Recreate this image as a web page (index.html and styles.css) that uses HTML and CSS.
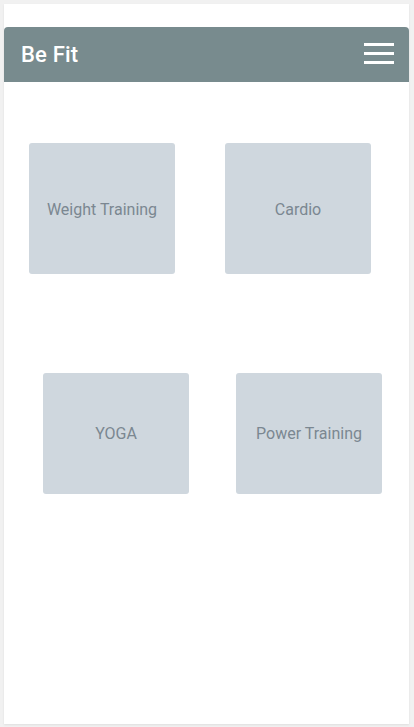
FILE: index.html
```html
<!DOCTYPE html>
<html>
<head>
<meta charset="utf-8">
<link rel="stylesheet" href="styles.css">
</head>
<body>
<div class="phone">
  <header class="topbar">
    <span class="brand">Be Fit</span>
    <span class="menu"><i></i><i></i><i></i></span>
  </header>
  <main>
    <div class="row row-a">
      <div class="tile tall">Weight Training</div>
      <div class="tile tall">Cardio</div>
    </div>
    <div class="row row-b">
      <div class="tile short">YOGA</div>
      <div class="tile short">Power Training</div>
    </div>
  </main>
</div>
</body>
</html>
```
FILE: styles.css
```css
html, body { margin: 0; padding: 0; }
body {
  background: #f1f1f1;
  font-family: Roboto, "Liberation Sans", sans-serif;
  height: 727px;
  overflow: hidden;
}
.phone {
  margin: 4px 5px 0 4px;
  height: 720px;
  background: #fff;
  box-shadow: 0 1px 2px rgba(0,0,0,0.08);
  padding-top: 23px;
  box-sizing: border-box;
}
.topbar {
  height: 55px;
  background: #788b8e;
  border-radius: 4px 4px 0 0;
  display: flex;
  align-items: center;
  justify-content: space-between;
  padding: 0 15px 0 17px;
}
.brand {
  color: #fff;
  font-size: 22px;
  font-weight: 500;
  letter-spacing: 0.2px;
}
.menu {
  display: flex;
  flex-direction: column;
  gap: 6px;
  width: 30px;
  margin-top: -3px;
}
.menu i {
  display: block;
  height: 3px;
  background: #fff;
}
.row { display: flex; }
.row-a { padding: 61px 0 0 25px; gap: 50px; }
.row-b { padding: 99px 0 0 39px; gap: 47px; }
.tile {
  width: 146px;
  background: #cfd7de;
  border-radius: 3px;
  display: flex;
  align-items: center;
  justify-content: center;
  color: #7b8791;
  font-size: 16px;
  box-sizing: border-box;
}
.tall { height: 131px; padding-top: 2px; }
.short { height: 121px; }
```
